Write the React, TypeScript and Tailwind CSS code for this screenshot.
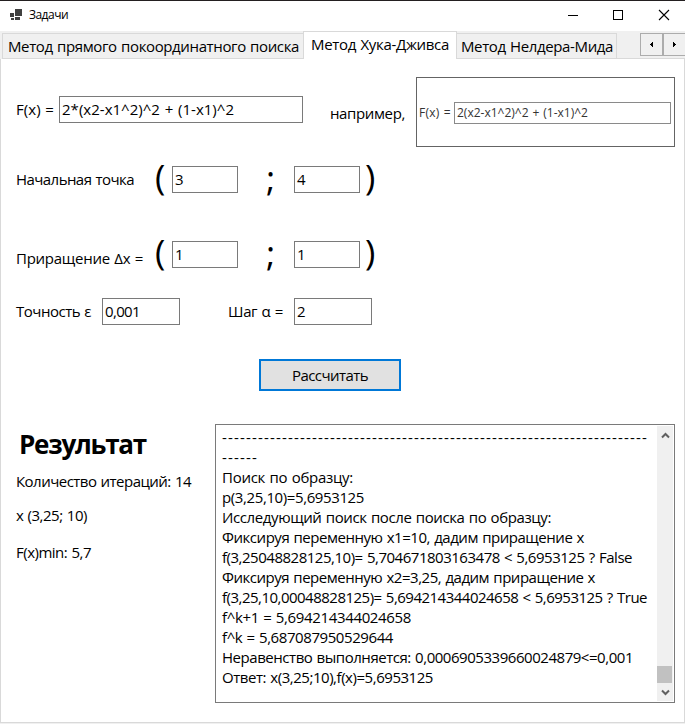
import { useLayoutEffect, useRef } from "react";

/** One line of text, tracked so that it fills the width of its box. */
function Fit({ className = "", children }: { className?: string; children: string }) {
  const box = useRef<HTMLDivElement>(null);
  const text = useRef<HTMLSpanElement>(null);
  useLayoutEffect(() => {
    if (!box.current || !text.current) return;
    text.current.style.letterSpacing = "0px";
    const spare = box.current.clientWidth - text.current.getBoundingClientRect().width;
    text.current.style.letterSpacing = `${spare / children.length}px`;
  }, [children]);
  return (
    <div ref={box} className={`shrink-0 whitespace-pre leading-5 [word-spacing:0.8px] ${className}`}>
      <span ref={text}>{children}</span>
    </div>
  );
}

function Field({ className, textWidth, value }: { className: string; textWidth: string; value: string }) {
  return (
    <div className={`h-[27px] shrink-0 border border-[#7a7a7a] bg-white pt-[2px] pl-[2px] ${className}`}>
      <Fit className={textWidth}>{value}</Fit>
    </div>
  );
}

function PointRow({ label, labelClass, a, b }: { label: string; labelClass: string; a: string; b: string }) {
  return (
    <div className="flex h-[32px] items-start">
      <Fit className={`ml-[15px] ${labelClass}`}>{label}</Fit>
      <span className="-mt-[3px] ml-auto w-[11px] shrink-0 text-[35px] leading-[32px]">(</span>
      <Field className="mt-[2px] ml-[6px] w-[66px]" textWidth="w-[9px]" value={a} />
      <span className="-mt-[2px] ml-[28px] w-[10px] shrink-0 text-[35px] leading-[32px]">;</span>
      <Field className="mt-[2px] ml-[18px] w-[66px]" textWidth="w-[9px]" value={b} />
      <span className="-mt-[3px] mr-[308px] ml-[5px] w-[11px] shrink-0 text-[35px] leading-[32px]">)</span>
    </div>
  );
}

const log: [string, string][] = [
  ["-".repeat(71), "w-[426px]"],
  ["------", "w-[36px]"],
  ["Поиск по образцу:", "w-[131px]"],
  ["p(3,25,10)=5,6953125", "w-[142px]"],
  ["Исследующий поиск после поиска по образцу:", "w-[329px]"],
  ["Фиксируя переменную x1=10, дадим приращение x", "w-[362px]"],
  ["f(3,25048828125,10)= 5,704671803163478 < 5,6953125 ? False", "w-[410px]"],
  ["Фиксируя переменную x2=3,25, дадим приращение x", "w-[373px]"],
  ["f(3,25,10,00048828125)= 5,694214344024658 < 5,6953125 ? True", "w-[425px]"],
  ["f^k+1 = 5,694214344024658", "w-[189px]"],
  ["f^k = 5,687087950529644", "w-[171px]"],
  ["Неравенство выполняется: 0,0006905339660024879<=0,001", "w-[411px]"],
  ["Ответ: x(3,25;10),f(x)=5,6953125", "w-[211px]"],
];

function TitleBar() {
  return (
    <header className="flex h-[31px] shrink-0 items-start border-t border-[#231f20] bg-white">
      <svg className="mt-[8px] ml-[10px] h-[12px] w-[13px]" viewBox="0 0 13 12" shapeRendering="crispEdges">
        <path d="M0 4h4v4H0zM1 9h3v2H1zM5 8h5v3H5z" fill="#404040" />
        <path d="M4 0h8v8H4z" fill="#fff" />
        <path d="M5 0h7v7H5z" fill="#404040" />
      </svg>
      <Fit className="mt-[4px] ml-[6px] w-[39px] text-[12px]">Задачи</Fit>
      <svg className="mt-[8px] mr-[14px] ml-auto h-[13px] w-[105px]" viewBox="0 0 105 13" fill="none" stroke="#000">
        <path d="M2 6.5h10M47.5 1.5h9v9h-9z" shapeRendering="crispEdges" />
        <path d="M93 1l10 10M103 1L93 11" strokeWidth="1.1" />
      </svg>
    </header>
  );
}

function Tabs() {
  return (
    <nav className="flex h-[28px] shrink-0 items-end bg-[#f0f0f0]">
      <div className="-mr-px ml-[2px] h-[26px] w-[302px] shrink-0 border border-[#d9d9d9] pt-[2px] pl-[5px]">
        <Fit className="w-[291px]">Метод прямого покоординатного поиска</Fit>
      </div>
      <div className="z-10 h-[28px] w-[154px] shrink-0 border-x border-t border-[#d9d9d9] bg-white pt-[2px] pl-[7px]">
        <Fit className="w-[138px]">Метод Хука-Дживса</Fit>
      </div>
      <div className="-ml-px h-[26px] w-[161px] shrink-0 border border-[#d9d9d9] pt-[2px] pl-[4px]">
        <Fit className="w-[152px]">Метод Нелдера-Мида</Fit>
      </div>
      <div className="h-[28px] min-w-0 flex-1 border-b border-[#d9d9d9] pt-[2px] pl-[23px]">
        <div className="flex h-[23px] w-[46px]">
          <div className="flex w-[23px] items-center justify-center border border-[#acacac]">
            <svg className="h-[5px] w-[3px]" viewBox="0 0 3 5" shapeRendering="crispEdges"><path d="M3 0v5h-1V4H1V3H0V2h1V1h1V0z" /></svg>
          </div>
          <div className="flex w-[23px] items-center justify-center border border-[#acacac]">
            <svg className="h-[5px] w-[3px]" viewBox="0 0 3 5" shapeRendering="crispEdges"><path d="M0 0v5h1V4h1V3h1V2H2V1H1V0z" /></svg>
          </div>
        </div>
      </div>
    </nav>
  );
}

export default function App() {
  return (
    <div className="flex h-[724px] w-[685px] flex-col overflow-hidden bg-[#f0f0f0] font-['Open_Sans','Noto_Sans',sans-serif] text-[15px] text-black">
      <TitleBar />
      <Tabs />
      <main className="flex h-[664px] shrink-0 flex-col border-x border-b border-[#d9d9d9] bg-white">
        <div className="flex h-[105px] shrink-0 items-start pt-[18px]">
          <Fit className="mt-[22px] ml-[15px] w-[38px]">F(x) =</Fit>
          <Field className="mt-[19px] ml-[5px] w-[244px]" textWidth="w-[172px]" value="2*(x2-x1^2)^2 + (1-x1)^2" />
          <Fit className="mt-[26px] ml-[27px] w-[75px]">например,</Fit>
          <div className="ml-[11px] flex h-[70px] w-[259px] shrink-0 border border-[#646464] pt-[24px] text-[12px] text-[#333]">
            <Fit className="mt-px ml-[2px] w-[32px]">F(x) =</Fit>
            <div className="ml-[3px] h-[22px] w-[217px] border border-[#8a8a8a] pl-[2px]">
              <Fit className="w-[131px]">2(x2-x1^2)^2 + (1-x1)^2</Fit>
            </div>
          </div>
        </div>
        <PointRow label="Начальная точка" labelClass="mt-[5px] w-[118px]" a="3" b="4" />
        <div className="h-[43px]" />
        <PointRow label="Приращение Δx =" labelClass="mt-[9px] w-[127px]" a="1" b="1" />
        <div className="mt-[27px] flex h-[27px] shrink-0">
          <Fit className="mt-[3px] ml-[15px] w-[75px]">Точность ε</Fit>
          <Field className="ml-[11px] w-[78px]" textWidth="w-[35px]" value="0,001" />
          <Fit className="mt-[3px] ml-[48px] w-[55px]">Шаг α =</Fit>
          <Field className="ml-[11px] w-[78px]" textWidth="w-[9px]" value="2" />
        </div>
        <button className="mt-[34px] ml-[258px] h-[32px] w-[142px] shrink-0 border-2 border-[#0078d7] bg-[#e1e1e1] pl-[31px] text-left">
          <Fit className="w-[76px]">Рассчитать</Fit>
        </button>
        <div className="mt-[33px] flex shrink-0">
          <section className="w-[214px] shrink-0 pl-[15px]">
            <Fit className="mt-[10px] ml-[3px] h-[37px] w-[127px] text-[26px] font-bold">Результат</Fit>
            <Fit className="h-[34px] w-[175px]">Количество итераций: 14</Fit>
            <Fit className="h-[37px] w-[71px]">x (3,25; 10)</Fit>
            <Fit className="w-[75px]">F(x)min: 5,7</Fit>
          </section>
          <section className="flex h-[279px] w-[460px] shrink-0 justify-between border border-[#7a7a7a] p-px">
            <div className="pt-px pl-[5px]">
              {log.map(([line, width], i) => (
                <Fit key={i} className={`h-5 ${width}`}>{line}</Fit>
              ))}
            </div>
            <div className="flex w-[16px] flex-col items-center bg-[#f0f0f0]">
              <svg className="mt-[6px] h-[7px] w-[9px]" viewBox="0 0 9 7" fill="none" stroke="#606060" strokeWidth="2"><path d="M1 5.5l3.5-3.5L8 5.5" /></svg>
              <div className="mt-auto h-[17px] w-[15px] self-start bg-[#c1c1c1]" />
              <svg className="mt-[6px] mb-[5px] h-[7px] w-[9px]" viewBox="0 0 9 7" fill="none" stroke="#606060" strokeWidth="2"><path d="M1 1.5L4.5 5 8 1.5" /></svg>
            </div>
          </section>
        </div>
      </main>
    </div>
  );
}
